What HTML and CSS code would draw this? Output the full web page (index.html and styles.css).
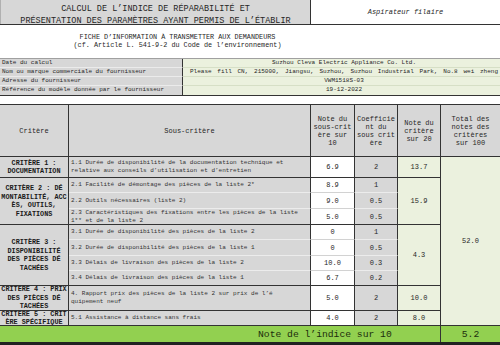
FILE: index.html
```html
<!DOCTYPE html>
<html lang="fr">
<head>
<meta charset="utf-8">
<title>Indice de réparabilité</title>
<link rel="stylesheet" href="styles.css">
</head>
<body>
<header class="title-block">
  <div class="title">CALCUL DE L’INDICE DE RÉPARABILITÉ ET<br>PRÉSENTATION DES PARAMÈTRES AYANT PERMIS DE L’ÉTABLIR</div>
  <div class="product">Aspirateur filaire</div>
</header>

<section class="fiche">FICHE D’INFORMATION À TRANSMETTER AUX DEMANDEURS<br>(cf. Article L. 541-9-2 du Code de l’environnement)</section>

<section class="supplier">
  <div class="lbl">Date du calcul</div>
  <div class="v center">Suzhou Cleva Electric Appliance Co. Ltd.</div>
  <div class="lbl">Nom ou marque commerciale du fournisseur</div>
  <div class="v justify">Please fill CN, 215000, Jiangsu, Suzhou, Suzhou Industrial Park, No.8 wei zheng</div>
  <div class="lbl">Adresse du fournisseur</div>
  <div class="v center">VWM1518S-03</div>
  <div class="lbl last">Référence du modèle donnée par le fournisseur</div>
  <div class="v center last">19-12-2022</div>
</section>

<section class="scores">
  <div class="c h">Critère</div>
  <div class="c h">Sous-critère</div>
  <div class="c h">Note du<br>sous-crit<br>ère sur<br>10</div>
  <div class="c h">Coefficie<br>nt du<br>sous crit<br>ère</div>
  <div class="c h">Note du<br>critère<br>sur 20</div>
  <div class="c h endc">Total des<br>notes des<br>critères<br>sur 100</div>

  <div class="c crit">CRITÈRE 1 :<br>DOCUMENTATION</div>
  <div class="c sub">1.1 Durée de disponibilité de la documentation technique et<br>relative aux conseils d’utilisation et d’entretien</div>
  <div class="c val">6.9</div>
  <div class="c coef">2</div>
  <div class="c note">13.7</div>
  <div class="c total endc">52.0</div>

  <div class="c crit span3">CRITÈRE 2 : DÉ<br>MONTABILITÉ, ACC<br>ÈS, OUTILS,<br>FIXATIONS</div>
  <div class="c sub thin">2.1 Facilité de démontage des pièces de la liste 2*</div>
  <div class="c val thin">8.9</div>
  <div class="c coef thin">1</div>
  <div class="c note span3">15.9</div>
  <div class="c sub thin">2.2 Outils nécessaires (liste 2)</div>
  <div class="c val thin">9.0</div>
  <div class="c coef thin">0.5</div>
  <div class="c sub">2.3 Caractéristiques des fixations entre les pièces de la liste<br>1** et de la liste 2</div>
  <div class="c val">5.0</div>
  <div class="c coef">0.5</div>

  <div class="c crit span4">CRITÈRE 3 :<br>DISPONIBILITÉ<br>DES PIÈCES DÉ<br>TACHÉES</div>
  <div class="c sub thin">3.1 Durée de disponibilité des pièces de la liste 2</div>
  <div class="c val thin">0</div>
  <div class="c coef thin">1</div>
  <div class="c note span4">4.3</div>
  <div class="c sub thin">3.2 Durée de disponibilité des pièces de la liste 1</div>
  <div class="c val thin">0</div>
  <div class="c coef thin">0.5</div>
  <div class="c sub thin">3.3 Délais de livraison des pièces de la liste 2</div>
  <div class="c val thin">10.0</div>
  <div class="c coef thin">0.3</div>
  <div class="c sub">3.4 Délais de livraison des pièces de la liste 1</div>
  <div class="c val">6.7</div>
  <div class="c coef">0.2</div>

  <div class="c crit">CRITÈRE 4 : PRIX<br>DES PIÈCES DÉ<br>TACHÉES</div>
  <div class="c sub">4. Rapport prix des pièces de la liste 2 sur prix de l’é<br>quipement neuf</div>
  <div class="c val">5.0</div>
  <div class="c coef">2</div>
  <div class="c note">10.0</div>

  <div class="c crit">CRITÈRE 5 : CRIT<br>ÈRE SPÉCIFIQUE</div>
  <div class="c sub">5.1 Assistance à distance sans frais</div>
  <div class="c val">4.0</div>
  <div class="c coef">2</div>
  <div class="c note">8.0</div>
</section>

<footer class="footer">
  <div class="footer-label">Note de l’indice sur 10</div>
  <div class="footer-value">5.2</div>
</footer>
</body>
</html>
```

FILE: styles.css
```css
* { box-sizing: border-box; }
html, body { margin: 0; padding: 0; }
body {
  width: 500px;
  height: 345px;
  overflow: hidden;
  background: #ffffff;
  font-family: "Liberation Mono", "DejaVu Sans Mono", monospace;
  color: #262626;
}

/* Title */
.title-block {
  display: flex;
  height: 25px;
  border-bottom: 1px solid #333333;
}
.title {
  width: 311px;
  background: #d7d7d7;
  border-left: 1px solid #b0b0b0;
  border-right: 1px solid #333333;
  text-align: center;
  font-size: 8.5px;
  line-height: 12px;
  padding-top: 2.5px;
  white-space: nowrap;
  overflow: hidden;
}
.product {
  flex: 1;
  display: flex;
  align-items: center;
  justify-content: center;
  font-style: italic;
  font-size: 7px;
}

/* Fiche */
.fiche {
  width: 355px;
  height: 33px;
  padding-top: 8px;
  text-align: center;
  font-size: 6.8px;
  line-height: 8px;
  white-space: nowrap;
}

/* Supplier */
.supplier {
  display: grid;
  grid-template-columns: 183px 1fr;
  grid-auto-rows: 9px;
  border-top: 1px solid #a0a0a0;
  border-bottom: 1px solid #333333;
  height: 38px;
  font-size: 6px;
  line-height: 8px;
}
.supplier .lbl {
  background: #d7d7d7;
  border-right: 1px solid #333333;
  border-bottom: 1px solid #ebebeb;
  padding-left: 2px;
  white-space: nowrap;
  overflow: hidden;
}
.supplier .v {
  background: #ebf1de;
  border-bottom: 1px solid #d6dfc6;
  white-space: nowrap;
  overflow: hidden;
  padding: 0 2px 0 7px;
}
.supplier .last { border-bottom: none; }
.supplier .center { text-align: center; }
.supplier .justify {
  white-space: normal;
  text-align: justify;
  text-align-last: justify;
}

/* Scores grid */
.scores {
  margin-top: 8px;
  border-top: 1px solid #333333;
  display: grid;
  grid-template-columns: 69px 242px 44px 43px 43px 59px;
  grid-template-rows: 52px 21px 15px 16px 16px 15px 16px 15px 15px 25px 15px;
}
.c {
  border-right: 1px solid #333333;
  border-bottom: 1px solid #333333;
  display: flex;
  align-items: center;
  justify-content: center;
  text-align: center;
  overflow: hidden;
  background: #d7d7d7;
  white-space: nowrap;
}
.endc { border-right: none; }
.h {
  font-size: 7px;
  line-height: 8px;
}
.crit {
  font-size: 6.8px;
  line-height: 8.5px;
  font-weight: bold;
  color: #1a1a1a;
}
.sub {
  justify-content: flex-start;
  text-align: left;
  padding-left: 2px;
  font-size: 6px;
  line-height: 8px;
  color: #333333;
}
.val {
  background: #ffffff;
  font-size: 7px;
}
.coef { font-size: 7px; }
.note {
  background: #ebf1de;
  font-size: 7px;
}
.total {
  background: #ebf1de;
  font-size: 7px;
  grid-row: span 10;
}
.span3 { grid-row: span 3; }
.span4 { grid-row: span 4; }
.sub.thin, .coef.thin { border-bottom-color: #ececec; }
.val.thin { border-bottom-color: #d2d2d2; }

/* Footer */
.footer {
  display: flex;
  height: 19px;
  background: #92d050;
  border-bottom: 3px solid #222222;
  color: #1c2e0c;
  font-size: 9.7px;
}
.footer-label {
  width: 441px;
  border-right: 1px solid #333333;
  padding-left: 258px;
  display: flex;
  align-items: center;
  white-space: nowrap;
}
.footer-value {
  flex: 1;
  display: flex;
  align-items: center;
  justify-content: center;
}
```
